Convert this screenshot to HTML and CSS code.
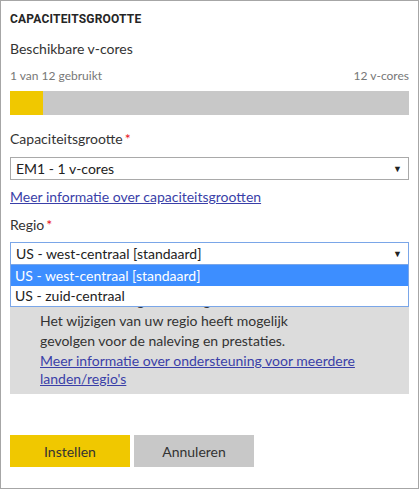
FILE: index.html
```html
<!DOCTYPE html>
<html lang="nl">
<head>
<meta charset="utf-8">
<link rel="stylesheet" href="styles.css">
</head>
<body>
<div class="panel">
  <h1 class="title">CAPACITEITSGROOTTE</h1>
  <div class="subtitle">Beschikbare v-cores</div>
  <div class="usage">
    <span>1 van 12 gebruikt</span>
    <span>12 v-cores</span>
  </div>
  <div class="bar"><div class="bar-fill" style="width: 8.33%"></div></div>

  <div class="label">Capaciteitsgrootte<span class="req">*</span></div>
  <div class="select select-first"><span>EM1 - 1 v-cores</span><span class="arrow">▼</span></div>
  <a class="link link-block" href="#">Meer informatie over capaciteitsgrootten</a>

  <div class="label label-tight">Regio<span class="req">*</span></div>
  <div class="region">
    <div class="select focused"><span>US - west-centraal [standaard]</span><span class="arrow">▼</span></div>
    <ul class="options">
      <li class="option selected">US - west-centraal [standaard]</li>
      <li class="option">US - zuid-centraal</li>
    </ul>
    <div class="info">
      <p class="hidden-line">Uw standaardregio is de regio van uw tenant.</p>
      <p>Het wijzigen van uw regio heeft mogelijk</p>
      <p>gevolgen voor de naleving en prestaties.</p>
      <a class="link info-link" href="#">Meer informatie over ondersteuning voor meerdere landen/regio's</a>
    </div>
  </div>

  <div class="actions">
    <button class="btn btn-primary">Instellen</button>
    <button class="btn btn-secondary">Annuleren</button>
  </div>
</div>
</body>
</html>
```
FILE: styles.css
```css
* { box-sizing: border-box; }
html, body { margin: 0; padding: 0; background: #fff; }
body {
  font-family: Lato, "Open Sans", sans-serif;
  color: #333;
  font-size: 14px;
}
.panel {
  width: 419px;
  height: 489px;
  border: 1px solid #a6a6a6;
  padding: 9px 9px 0 9px;
}
.title {
  margin: 0;
  font-family: Roboto, "Liberation Sans", sans-serif;
  font-size: 12px;
  font-weight: 700;
  line-height: 18px;
  letter-spacing: 0.2px;
  color: #252525;
}
.subtitle {
  margin-top: 11px;
  font-size: 14px;
  line-height: 20px;
}
.usage {
  margin-top: 9px;
  display: flex;
  justify-content: space-between;
  font-size: 12px;
  line-height: 16px;
  color: #777;
}
.bar {
  margin-top: 7px;
  height: 24px;
  background: #c8c8c8;
}
.bar-fill {
  height: 100%;
  background: #f0c800;
}
.label {
  margin-top: 14px;
  font-size: 14px;
  line-height: 20px;
}
.label-tight { margin-top: 8px; }
.req { color: #e81123; margin-left: 2px; }
.select {
  height: 23px;
  border: 1px solid #a9a9a9;
  display: flex;
  align-items: center;
  justify-content: space-between;
  padding: 0 6px 0 5px;
  font-size: 14px;
  color: #222;
}
.select-first { margin-top: 8px; }
.select.focused { border-color: #7aa6e8; }
.arrow { font-size: 9px; color: #222; }
.link {
  color: #3a3fa8;
  text-decoration: underline;
  font-size: 14px;
}
.link-block {
  display: block;
  margin-top: 7px;
  line-height: 20px;
}
.region { position: relative; margin-top: 7px; }
.options {
  position: absolute;
  top: 23px;
  left: 0;
  right: 0;
  margin: 0;
  padding: 0;
  list-style: none;
  border: 1px solid #7aa6e8;
  border-top: 0;
  background: #fff;
  z-index: 2;
}
.option {
  height: 20px;
  line-height: 20px;
  padding-left: 4px;
  font-size: 14px;
  color: #222;
}
.option.selected { background: #3d8eff; color: #fff; height: 21px; line-height: 21px; }
.info {
  margin-top: 8px;
  background: #dcdcdc;
  padding: 18px 20px 6px 30px;
  font-size: 14px;
  color: #333;
}
.info p { margin: 0; line-height: 20px; }
.info .hidden-line { white-space: nowrap; }
.info-link { display: block; font-size: 14px; line-height: 18px; margin-top: 1px; }
.actions {
  margin-top: 41px;
  display: flex;
  gap: 4px;
}
.btn {
  width: 120px;
  height: 32px;
  border: 0;
  font-family: inherit;
  font-size: 14px;
  color: #333;
  padding: 0;
}
.btn-primary { background: #f0c800; }
.btn-secondary { background: #c8c8c8; }
```
